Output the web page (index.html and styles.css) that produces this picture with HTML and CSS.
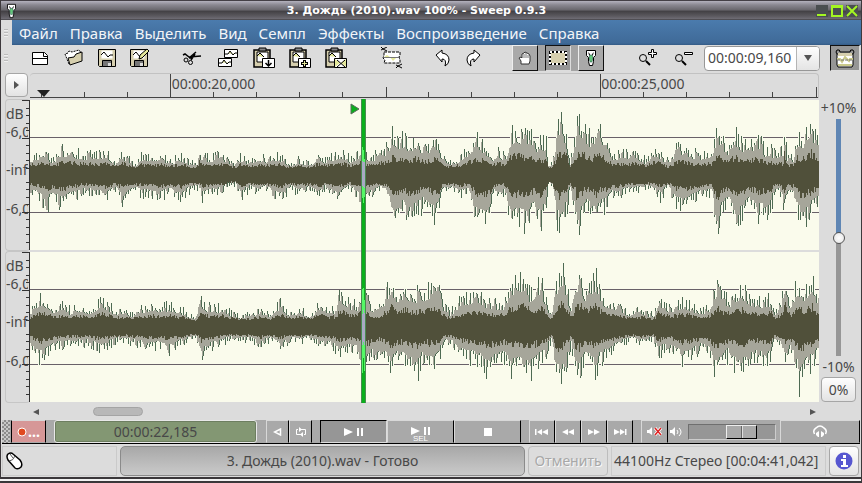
FILE: index.html
```html
<!DOCTYPE html>
<html lang="ru">
<head>
<meta charset="utf-8">
<title>3. Дождь (2010).wav 100% - Sweep 0.9.3</title>
<link rel="stylesheet" href="styles.css">
</head>
<body>
<svg class="defs" aria-hidden="true">
  <defs>
    <g id="board">
      <path d="M1 3h16v17h-16z" fill="#d6cfae" stroke="#000" stroke-width="1.500"/>
      <path d="M4 5h11v10h-11z" fill="#fff" stroke="#000"/>
      <path d="M4 9l3-3 4 4" fill="#e4e89a" stroke="#000"/>
      <path d="M6 1h7v3h-7z" fill="#888" stroke="#000"/>
      <path d="M9.500 11.500h12v9h-12z" fill="#fff" stroke="#000"/>
    </g>
    <g id="disk">
      <path d="M.5.5h17v17h-16l-1-1z" fill="#d6cfae" stroke="#000"/>
      <path d="M3.500 1.500h11v8h-11z" fill="#fff"/>
      <path d="M3 6l3-3 4 5 2-2h3" fill="none" stroke="#000"/>
      <path d="M4.500 11.500h9v6h-9z" fill="#777" stroke="#000"/>
      <path d="M10 14h3v3h-3z" fill="#ddd"/>
    </g>
    <g id="probe">
      <path d="M1.500 1.500h9v5l-2 2v4l-1 4h-3l-1-4v-4l-2-2z" fill="#fff" stroke="#000"/>
      <path d="M3 3l2 2v2l-1-1zM9 3l-2 2v2l1-1z" fill="#222"/>
      <path d="M5 6h2l1 2-1 5h-2l-1-5z" fill="#62c77a" stroke="#244" stroke-width=".5"/>
    </g>
  </defs>
</svg>
<div class="window">
  <header class="title">
    <svg class="title-icon" viewBox="0 0 12 18"><use href="#probe"/></svg>
    <h1>3. Дождь (2010).wav 100% - Sweep 0.9.3</h1>
    <div class="controls">
      <button aria-label="Свернуть"><svg viewBox="0 0 12 12"><path d="M1 10h9" stroke-width="2"/></svg></button>
      <button aria-label="Развернуть"><svg viewBox="0 0 12 12"><path d="M1 1h10v10h-10zM1 2h10"/></svg></button>
      <button aria-label="Закрыть"><svg viewBox="0 0 12 12"><path d="M1 1l10 10M11 1l-10 10" stroke-width="2"/></svg></button>
    </div>
  </header>

  <nav class="menu">
    <span class="grip"></span>
    <div class="menu-items">
      <a href="#">Файл</a><a href="#">Правка</a><a href="#">Выделить</a><a href="#">Вид</a><a href="#">Семпл</a><a href="#">Эффекты</a><a href="#">Воспроизведение</a><a href="#">Справка</a>
    </div>
  </nav>

  <div class="toolbar">
    <span class="grip"></span>
    <div class="group files">
      <button aria-label="Новый"><svg width="17" height="13" viewBox="0 0 17 13"><path d="M.5.5h12l3 3v9h-15z" fill="#fff" stroke="#000"/><path d="M11.500 1v3.500h4M1 6.500h14" fill="none" stroke="#000"/></svg></button>
      <button aria-label="Открыть"><svg width="20" height="18" viewBox="0 0 20 18"><path d="M5 15L1 5l3-1 1-2 3 1 7-2 3 4-7 5z" fill="#fff" stroke="#000" stroke-dasharray="2 1"/><path d="M6 16L4 9l6-1 2-3 6-2v9z" fill="#d6cfae" stroke="#000"/></svg></button>
      <button aria-label="Сохранить"><svg width="18" height="18" viewBox="0 0 18 18"><use href="#disk"/></svg></button>
      <button aria-label="Сохранить как"><svg width="20" height="20" viewBox="0 0 20 20"><use href="#disk" y="1"/><path d="M9 11l1-4 7-6 2 2-7 7z" fill="#e4e89a" stroke="#000"/></svg></button>
    </div>
    <div class="group edit">
      <button aria-label="Вырезать"><svg width="20" height="16" viewBox="0 0 20 16"><g fill="none" stroke="#000"><path d="M1 5l2-1 4 3 12-1M7 8l7-6M13 4l-4 6M7 8l3 0" stroke-width="1.500"/><circle cx="4" cy="10" r="2"/><circle cx="8.500" cy="12.500" r="2"/></g></svg></button>
      <button aria-label="Копировать"><svg width="20" height="18" viewBox="0 0 20 18"><path d="M6.500.5h13v8h-13zM.5 9.500h13v8h-13z" fill="#fff" stroke="#000"/><path d="M7 5h3l2-3 3 4 2-2h3M1 14h3l2-3 3 4 2-2h3" fill="#e4e89a" stroke="#000"/></svg></button>
      <button aria-label="Вставить"><svg width="22" height="22" viewBox="0 0 22 22"><use href="#board"/><path d="M15.500 13v5m-3-2l3 3 3-3" fill="none" stroke="#000" stroke-width="1.500"/></svg></button>
      <button aria-label="Смешать"><svg width="22" height="22" viewBox="0 0 22 22"><use href="#board"/><path d="M15.500 13v7M12 16.500h7" stroke="#000" stroke-width="3"/><path d="M15.500 14v5M13 16.500h5" stroke="#e4e89a"/></svg></button>
      <button aria-label="Плавная вставка"><svg width="22" height="22" viewBox="0 0 22 22"><use href="#board"/><path d="M10 12l5 4-5 4zM21 12l-5 4 5 4z" fill="#e4e89a"/><path d="M12 13l8 7M20 13l-8 7" stroke="#000"/></svg></button>
    </div>
    <div class="group crop">
      <button aria-label="Обрезать"><svg width="22" height="22" viewBox="0 0 22 22"><path d="M3 5h16v3l-1 2 1 3v3h-16l1-3-2-2 1-3z" fill="#fff" stroke="#000" stroke-dasharray="3 1"/><path d="M3 10l3-2 3 2 3 4 4-4z" fill="#e4e89a"/><path d="M3 10.500h15" stroke="#777"/><path d="M0 0l2 2 4-2M0 3l2-1 4 2M15 18l2 1 4-2M15 21l2-2 4 2" fill="none" stroke="#000"/></svg></button>
    </div>
    <div class="group history">
      <button aria-label="Отменить действие"><svg width="16" height="18" viewBox="0 0 16 18"><path d="M1 6l6-5v3q7 1 7 7 0 4-4 6 2-7-3-7v3z" fill="#fff" stroke="#000"/></svg></button>
      <button aria-label="Повторить"><svg width="16" height="18" viewBox="0 0 16 18"><path d="M15 6l-6-5v3q-7 1-7 7 0 4 4 6-2-7 3-7v3z" fill="#fff" stroke="#000"/></svg></button>
    </div>
    <div class="group modes">
      <button aria-label="Рука"><svg width="14" height="14" viewBox="0 0 14 14"><path d="M3 13V10L1 7l2-1 1 1V3l2-1 1-1 2 1 2 1 1 2v5l-1 3z" fill="#fff" stroke="#333"/><path d="M6 3v4M8 2v5M10 4v3" stroke="#777"/></svg></button>
      <button class="pressed" aria-label="Выделение"><svg width="18" height="14" viewBox="0 0 18 14"><path d="M1 1h16v12h-16z" fill="#d6cfae" stroke="#000" stroke-width="2"/><path d="M1 1h16v12h-16z" fill="none" stroke="#fff" stroke-width="2" stroke-dasharray="2"/></svg></button>
      <button aria-label="Проба"><svg width="12" height="18" viewBox="0 0 12 18"><use href="#probe"/></svg></button>
    </div>
    <div class="group zoom">
      <button aria-label="Увеличить"><svg width="20" height="18" viewBox="0 0 20 18"><circle cx="5" cy="9" r="3.500" fill="#ddd" stroke="#000"/><path d="M8 12l4 4" stroke="#000" stroke-width="2"/><path d="M13.500.5h2v3h3v2h-3v3h-2v-3h-3v-2h3z" fill="#fff" stroke="#000"/></svg></button>
      <button aria-label="Уменьшить"><svg width="20" height="18" viewBox="0 0 20 18"><circle cx="5" cy="9" r="3.500" fill="#ddd" stroke="#000"/><path d="M8 12l4 4" stroke="#000" stroke-width="2"/><path d="M10.500 3.500h8v2h-8z" fill="#fff" stroke="#000"/></svg></button>
    </div>
    <div class="combo">
      <input type="text" value="00:00:09,160" aria-label="Длина видимой области">
      <button aria-label="Выбрать"><svg width="8" height="6" viewBox="0 0 8 6"><path d="M0 0h8l-4 6z" fill="#555"/></svg></button>
    </div>
    <button class="follow" aria-label="Следовать"><svg width="20" height="20" viewBox="0 0 20 20"><path d="M2 6h16v11l-1 2h-14l-1-2z" fill="#fff" stroke="#000"/><path d="M3 5h14v3h-14z" fill="#d6cfae"/><path d="M2 11h3l2 3 3-5 4 4 1-2h3M3 17h14" fill="none" stroke="#c9c88a" stroke-width="2"/><path d="M2 12h16" stroke="#777" stroke-dasharray="3 1"/><path d="M2 6q-2-2 0-4 3-1 3 2h10q0-3 3-2 2 2 0 4" fill="none" stroke="#000"/></svg></button>
  </div>

  <main class="work">
    <button class="corner" aria-label="Меню"><svg width="6" height="8" viewBox="0 0 6 8"><path d="M0 0l5 4-5 4z" fill="#555"/></svg></button>
    <div class="ruler">
      <svg id="ruler" viewBox="0 0 789 24" preserveAspectRatio="none"></svg>
      <span class="stamp first">00:00:20,000</span>
      <span class="stamp second">00:00:25,000</span>
    </div>
    <div class="scales">
      <div class="scale"><span>dB</span><span>-6,0</span><span>-inf</span><span>-6,0</span><svg viewBox="0 0 8 151" preserveAspectRatio="none"></svg></div>
      <div class="scale"><span>dB</span><span>-6,0</span><span>-inf</span><span>-6,0</span><svg viewBox="0 0 8 151" preserveAspectRatio="none"></svg></div>
    </div>
    <div class="tracks">
      <svg class="wave" id="left" viewBox="0 0 789 150" preserveAspectRatio="none"></svg>
      <svg class="wave" id="right" viewBox="0 0 789 150" preserveAspectRatio="none"></svg>
      <div class="cursor"></div>
      <svg class="flag" viewBox="0 0 10 12"><path d="M1 1l8 5-8 5z" fill="#0aaf1c" stroke="#5d6a5d"/></svg>
    </div>
    <div class="speed">
      <label for="speed">+10%</label>
      <input id="speed" type="range" min="-10" max="10" value="0">
      <span>-10%</span>
      <button>0%</button>
    </div>
    <div class="scroll">
      <button aria-label="Назад"><svg width="6" height="6" viewBox="0 0 6 6"><path d="M6 0v6l-6-3z" fill="#555"/></svg></button>
      <div class="lane"><span class="thumb"></span></div>
      <button aria-label="Вперёд"><svg width="6" height="6" viewBox="0 0 6 6"><path d="M0 0v6l6-3z" fill="#555"/></svg></button>
    </div>
  </main>

  <div class="transport">
    <span class="dots"></span>
    <button class="record"><svg width="10" height="10" viewBox="0 0 10 10"><circle cx="5" cy="5" r="4" fill="#e04a20" stroke="#fff"/></svg>…</button>
    <output class="clock">00:00:22,185</output>
    <div class="keys small">
      <button aria-label="Реверс"><svg width="9" height="8" viewBox="0 0 9 8"><path d="M7.500 1v6l-6-3z" fill="none" stroke="#fff" stroke-width="1.500"/></svg></button>
      <button aria-label="Цикл"><svg width="12" height="10" viewBox="0 0 12 10"><path d="M3 2.500H1.500v5h3M9 7.500h1.500v-5h-3M6 7.500h-2M4 2.500h4" fill="none" stroke="#fff"/><path d="M4 0v5l3-2.500zM8 5v5L5 7.500z" fill="#fff"/></svg></button>
    </div>
    <div class="keys wide">
      <button class="pressed" aria-label="Пуск"><svg width="20" height="8" viewBox="0 0 20 8"><path d="M0 0l9 4-9 4zM13 0h2v8h-2zM17 0h2v8h-2z" fill="#fff"/></svg></button>
      <button class="sel" aria-label="Пуск выделения"><svg width="20" height="8" viewBox="0 0 20 8"><path d="M0 0l9 4-9 4zM13 0h2v8h-2zM17 0h2v8h-2z" fill="#fff"/></svg><small>SEL</small></button>
      <button aria-label="Стоп"><svg width="8" height="8" viewBox="0 0 8 8"><path d="M0 0h8v8H0z" fill="#fff"/></svg></button>
    </div>
    <div class="keys skip">
      <button aria-label="В начало"><svg width="14" height="6" viewBox="0 0 14 6"><path d="M0 0h1.500v6H0zM7 0v6L2 3zM13 0v6L7 3z" fill="#fff"/></svg></button>
      <button aria-label="Назад"><svg width="12" height="6" viewBox="0 0 12 6"><path d="M6 0v6L0 3zM12 0v6L6 3z" fill="#fff"/></svg></button>
      <button aria-label="Вперёд"><svg width="12" height="6" viewBox="0 0 12 6"><path d="M0 0v6l6-3zM6 0v6l6-3z" fill="#fff"/></svg></button>
      <button aria-label="В конец"><svg width="14" height="6" viewBox="0 0 14 6"><path d="M1 0v6l6-3zM7 0v6l5-3zM12 0h1.500v6H12z" fill="#fff"/></svg></button>
    </div>
    <div class="keys small">
      <button class="mute" aria-label="Без звука"><svg width="15" height="9" viewBox="0 0 15 9"><path d="M0 3h2l3-3v8L2 6H0z" fill="#fff"/><path d="M8 1l6 7M14 1l-6 7" stroke="#fff" stroke-width="3"/><path d="M8 1l6 7M14 1l-6 7" stroke="#d22" stroke-width="1.500"/></svg></button>
    </div>
    <label class="volume" for="volume"><svg width="14" height="10" viewBox="0 0 14 10"><path d="M0 3h2l3-3v9L2 6H0z" fill="#fff"/><path d="M7 3q2 2 0 4M9 1q4 4 0 8" fill="none" stroke="#fff"/></svg></label>
    <input id="volume" type="range" min="0" max="100" value="68">
    <button class="monitor" aria-label="Наушники"><svg width="14" height="13" viewBox="0 0 14 13"><path d="M1.500 9Q-.5 5 3 3q4-4 8 0 3.500 2 1.500 6" fill="none" stroke="#fff" stroke-width="1.500"/><path d="M3 8l3-2v6H5L3 10zM11 8L8 6v6h1l2-2z" fill="#fff"/></svg></button>
  </div>

  <footer class="status">
    <div class="cell pointer"><svg width="18" height="19" viewBox="0 0 18 19"><path d="M2 2q3-2 5 0l7 6q3 4 1 7-3 3-6 1L2 8Q0 4 2 2z" fill="#fff" stroke="#000" stroke-width="1.500"/><path d="M3 9q4 0 6-5M4 2l3 4" fill="none" stroke="#555"/></svg></div>
    <div class="progress">3. Дождь (2010).wav - Готово</div>
    <button class="cancel" disabled>Отменить</button>
    <div class="cell info">44100Hz Стерео [00:04:41,042]</div>
    <button class="about" aria-label="Сведения"><svg width="18" height="18" viewBox="0 0 18 18"><circle cx="9" cy="9" r="8.500" fill="#5656d0"/><path d="M8 3h3v3H8zM6 7h5v6h2v2H6v-2h2V9H6z" fill="#fff"/></svg></button>
  </footer>
  <div class="resize"><span></span></div>
</div>
<script src="wave.js"></script>
</body>
</html>
```
FILE: styles.css
```css
* { box-sizing: border-box; }
body {
  margin: 0;
  font: 14px/18px "Noto Sans", "Open Sans", sans-serif;
  color: #484848;
}
button, input { font: inherit; color: inherit; margin: 0; padding: 0; border: 0; background: none; }
button { display: flex; align-items: center; justify-content: center; }
svg { display: block; flex: none; }
.defs { position: absolute; width: 0; height: 0; }
.window {
  height: 100vh;
  display: grid;
  grid-template-columns: minmax(0, 1fr);
  grid-template-rows: 20px 25px 28px minmax(0, 1fr) 24px 33px 6px;
  border: solid #3d393c;
  border-width: 0 1px 0 1px;
  background: #dcdcdc;
}

.title {
  display: flex;
  align-items: center;
  padding: 0 3px 0 5px;
  border-top: 1px solid #444046;
  background: linear-gradient(#b4b2be, #8b8992 20%, #6c6a70 45%, #444246 55%, #5c5a60 80%, #6e6c74 94%, #39363a);
}
.title-icon { width: 11px; height: 16px; }
.title h1 {
  flex: 1;
  margin: 0;
  text-align: center;
  font: bold 11px/16px "DejaVu Sans", sans-serif;
  color: #fff;
}
.controls { display: flex; gap: 3px; }
.controls svg { width: 12px; height: 12px; fill: none; stroke: #a4f622; stroke-width: 2; }
.controls button { background: #4a4e50; }

.grip {
  width: 4px;
  height: 8px;
  margin: 0 3px;
  background: repeating-linear-gradient(#bcbcbc 0 1px, #efefef 1px 2px, transparent 2px 3px);
}
.menu { display: flex; align-items: center; }
.menu .grip { margin-right: 4px; }
.menu-items {
  flex: 1;
  align-self: stretch;
  display: flex;
  align-items: center;
  gap: 12px;
  padding-left: 7px;
  background: linear-gradient(#4b7bad, #3f6a98 92%, #345b86);
}
.menu a { color: #f2f5f8; text-decoration: none; font-size: 15px; }

.toolbar { display: flex; align-items: center; padding: 0 1px 2px 0; }
.toolbar > .grip { margin-right: 13px; }
.group { display: flex; align-items: center; margin-right: 20px; }
.group button { height: 26px; }
.files { margin: 0 18px 0 3px; }
.files button { width: 33px; }
.edit button, .crop button, .zoom button { width: 36px; }
.crop { margin-right: 18px; }
.history { margin-right: 24px; }
.history button { width: 30px; }
.modes { gap: 7px; margin-right: 26px; background: #a4a4a4; }
.modes button {
  width: 26px;
  background: #a9a9a9;
  border: 1px solid #eee;
  border-color: #eee #111 #111 #eee;
}
.modes .pressed, .follow {
  background: #969696;
  border: 1px solid #111;
  border-color: #111 #ddd #ddd #111;
}
.zoom { margin-right: 2px; }
.combo {
  flex: 1;
  display: flex;
  height: 25px;
  margin-right: 10px;
  border: 1px solid #979797;
  border-radius: 4px;
  background: #fff;
  overflow: hidden;
}
.combo input { flex: 1; width: 0; padding-left: 3px; }
.combo button { width: 23px; border-left: 1px solid #b5b5b5; background: linear-gradient(#fdfdfd, #e4e4e4); }
.follow { width: 30px; height: 26px; }

.work {
  display: grid;
  grid-template-columns: 29px minmax(0, 1fr) 42px;
  grid-template-rows: 26px minmax(0, 1fr) 17px;
}
.corner, .speed button, .about {
  border: 1px solid #a6a6a6;
  border-radius: 4px;
  background: linear-gradient(#fefefe, #e3e3e3);
}
.corner { width: 23px; height: 24px; margin-left: 4px; }
.ruler {
  position: relative;
  height: 25px;
  border-top: 1px solid #c2c2c2;
  border-right: 1px solid #c2c2c2;
  border-radius: 4px 4px 0 0;
}
.ruler svg { width: 100%; height: 24px; }
.stamp { position: absolute; top: 1px; }
.first { left: 18%; }
.second { left: 72.500%; }
.scales { display: grid; grid-template-rows: minmax(0, 1fr) minmax(0, 1fr); padding-left: 4px; }
.scale {
  position: relative;
  display: grid;
  grid-template-rows: 18px 38px 39px 18px;
  padding-top: 5px;
  border: 1px solid #c6c6c6;
  border-right: 0;
  border-radius: 4px;
}
.scale span { width: 22px; overflow: hidden; white-space: nowrap; }
.scale svg { position: absolute; right: 0; top: 0; width: 8px; height: 100%; }
.tracks {
  position: relative;
  display: grid;
  grid-template-rows: minmax(0, 1fr) minmax(0, 1fr);
  gap: 2px;
  padding: 1px 0;
}
.wave { width: 100%; height: 100%; min-height: 0; background: #fafbec; }
.cursor {
  position: absolute;
  left: 42%;
  top: 0;
  bottom: 0;
  width: 5px;
  border: solid #4a8a50;
  border-width: 0 1px;
  background: #0aaf1c;
}
.flag { position: absolute; left: 40.500%; top: 4px; width: 10px; height: 12px; }
.speed {
  grid-column: 3;
  grid-row: 1 / span 3;
  display: flex;
  flex-direction: column;
  align-items: center;
  padding: 26px 3px 18px 0;
}
.speed input {
  appearance: none;
  writing-mode: vertical-lr;
  direction: rtl;
  flex: 1;
  min-height: 0;
  width: 14px;
  margin: 2px 0;
  background: linear-gradient(#5f86b4 0 50%, #969696 50%) center / 5px 100% no-repeat;
}
.speed input::-webkit-slider-thumb {
  appearance: none;
  width: 12px;
  height: 12px;
  border: 1px solid #555;
  border-radius: 50%;
  background: radial-gradient(#fff, #e2e2e2);
}
.speed button { width: 35px; height: 25px; margin-top: 1px; }
.scroll {
  grid-column: 1 / span 2;
  grid-row: 3;
  display: flex;
  align-items: center;
  padding: 0 3px 0 32px;
}
.lane { flex: 1; padding-left: 6.900%; }
.thumb {
  display: block;
  width: 50px;
  height: 9px;
  border: 1px solid #a4a4a4;
  border-radius: 5px;
  background: #b8b8b8;
}

.transport {
  display: flex;
  margin: 0 1px;
  background: #a9a9a9;
  border-bottom: 1px solid #000;
}
.dots {
  width: 8px;
  background: repeating-conic-gradient(#8c8c8c 0 25%, #c8c8c8 0 50%) 0 0 / 4px 4px;
}
.transport button { border: 1px solid #d8d8d8; border-color: #d8d8d8 #000 #a9a9a9 #d8d8d8; }
.transport .record {
  width: 35px;
  gap: 1px;
  margin: 0 8px 0 1px;
  background: #d69797;
  border-left-color: #000;
  color: #fff;
  font-weight: bold;
}
.clock {
  flex: 1;
  display: grid;
  place-items: center;
  margin-right: 9px;
  border: 1px solid #e8e8e8;
  border-radius: 3px;
  background: #839773;
  box-shadow: inset 0 0 0 1px #6d7e60;
}
.keys { display: flex; }
.small button { width: 23px; }
.small .mute { width: 27px; }
.small, .wide { margin-right: 8px; }
.wide button { width: 67px; }
.transport .wide .pressed { background: #969696; border-color: #000 #ddd #ddd #000; }
.transport .sel { flex-direction: column; padding-top: 6px; }
.sel small { font: 8px/7px "Liberation Sans", sans-serif; color: #fff; }
.skip { margin-right: 8px; }
.skip button { width: 26px; }
.transport .keys:has(.mute) { margin-right: 2px; }
.volume { width: 18px; display: flex; align-items: center; }
#volume {
  appearance: none;
  width: 88px;
  height: 16px;
  margin: 4px 4px 0 0;
  background: #969696;
  border: 1px solid #6f6f6f;
  border-color: #6f6f6f #ccc #ccc #6f6f6f;
}
#volume::-webkit-slider-thumb {
  appearance: none;
  width: 31px;
  height: 14px;
  border: 1px solid #eee;
  border-color: #eee #000 #000 #eee;
  background: linear-gradient(90deg, transparent 14px, #666 14px 15px, #ddd 15px 16px, transparent 16px), #a9a9a9;
}
.transport .monitor { width: 80px; }

.status { display: flex; gap: 3px; padding: 2px 1px 1px; }
.cell { display: flex; align-items: center; border: 1px solid #cacaca; }
.pointer { width: 115px; padding-left: 3px; }
.progress {
  flex: 1;
  display: grid;
  place-items: center;
  border: 1px solid #8b8b8b;
  border-radius: 5px;
  background: linear-gradient(#a8a8a8, #cacaca);
}
.cancel {
  width: 80px;
  border: 1px solid #bdbdbd;
  border-radius: 4px;
  color: #a8a8a8;
  text-shadow: 1px 1px #f8f8f8;
}
.info { width: 215px; padding-left: 2px; white-space: nowrap; }
.about { width: 30px; margin-right: 1px; }
.resize {
  border: solid #3a373a;
  border-width: 1px 0;
  background: #3a373a;
  padding: 1px 0 0;
}
.resize span {
  display: block;
  height: 2px;
  margin: 0 26px 0 25px;
  background: #f2f2f2;
  box-shadow: -26px 0 #f2f2f2, 26px 0 #f2f2f2;
}
```
FILE: wave.js
```js
// Envelope samples: x, peak above the axis, peak below the axis.
const LEFT = `30 18 16,38 22 22,43 26 30,47 24 34,52 16 25,62 27 32,70 26 25,85 22 18,100 22 22,105 24 26,115 15 15,122 23 28,
135 12 16,140 20 20,150 18 20,160 21 24,170 14 18,180 20 26,190 14 16,197 14 14,199 28 14,202 20 24,210 18 20,221 24 18,228 16 10,
235 12 10,240 20 24,250 15 14,258 20 20,265 18 14,280 20 26,290 12 14,298 17 20,310 12 16,318 22 24,325 16 14,338 24 24,343 23 20,
350 17 14,362 26 28,370 18 22,380 26 16,386 28 20,389 30 30,392 46 48,397 36 44,403 40 36,409 34 48,416 38 40,425 28 30,432 36 44,
439 36 38,442 18 18,450 14 14,460 18 22,468 28 18,477 39 48,481 36 50,488 22 50,493 18 20,497 28 20,505 18 20,511 44 56,517 48 46,
525 40 52,529 48 46,535 32 36,540 36 52,546 36 38,548 12 10,552 14 12,557 46 50,561 54 56,566 46 40,570 14 14,575 36 36,577 58 70,
579 56 56,585 48 34,592 38 36,596 52 54,600 50 36,606 36 34,612 22 22,618 22 24,628 22 16,636 24 16,645 16 14,656 28 18,660 24 24,
668 14 14,676 28 30,684 30 34,692 24 28,700 22 22,708 24 20,712 24 20,714 38 46,718 44 56,722 36 40,728 30 30,735 44 46,740 34 48,
748 32 32,758 38 42,765 26 40,771 28 34,775 22 16,779 26 18,783 24 30,784 54 36,787 18 20,793 18 22,797 42 34,801 36 54,805 42 48,
810 58 44,812 54 36,819 28 30`;
const RIGHT = `30 18 20,40 32 34,46 28 30,55 18 22,62 25 20,70 18 18,82 22 18,90 18 18,101 28 26,105 25 22,115 18 16,125 17 14,
133 14 18,140 20 18,150 22 22,158 22 20,168 22 26,180 19 18,190 13 14,196 10 12,199 24 18,201 28 34,207 22 24,215 20 20,222 22 18,
230 16 12,240 12 14,250 14 14,260 19 20,270 14 14,280 26 22,290 14 14,300 20 16,310 12 12,320 26 20,328 18 20,335 20 24,340 38 30,
345 30 26,350 24 24,357 24 26,362 36 40,367 32 42,372 22 30,380 20 26,386 36 36,391 48 46,396 36 36,400 38 36,406 42 36,412 34 44,
417 36 52,423 38 34,433 42 44,438 43 36,443 24 18,450 16 16,460 28 30,472 34 34,480 34 38,488 26 48,495 26 40,503 24 34,511 46 46,
518 48 44,525 54 46,530 36 50,540 48 36,546 30 30,551 14 14,556 44 52,561 62 56,566 44 40,571 20 18,575 44 46,579 60 52,585 38 36,
590 46 38,597 54 50,600 38 36,606 26 32,615 24 24,622 20 18,630 14 14,638 20 16,645 18 18,653 12 12,658 30 30,665 22 24,672 22 24,
682 26 36,690 24 32,700 18 24,708 20 24,714 36 44,717 48 50,722 36 40,730 28 28,737 38 50,742 40 46,750 30 36,758 28 32,766 28 34,
771 30 36,774 16 14,780 24 20,785 52 36,790 24 24,797 46 46,799 44 64,805 36 46,813 52 38,819 20 24`;

const WIDTH = 789;
const CURSOR = [332, 335];

function noise(seed) {
  let s = seed;
  return () => {
    s = (s * 1664525 + 1013904223) % 4294967296;
    return s / 4294967296;
  };
}

function envelope(points, x, side) {
  const i = Math.max(1, points.findIndex(p => p[0] > x));
  const a = points[i - 1], b = points[i];
  return a[side] + (b[side] - a[side]) * (x - a[0]) / (b[0] - a[0]);
}

function draw(id, text, seed) {
  const points = text.split(',').map(p => p.trim().split(' ').map(Number));
  const random = noise(seed);
  const peaks = [], core = [];
  for (let x = 0; x < WIDTH; x++) {
    const up = envelope(points, x + 30, 1), down = envelope(points, x + 30, 2);
    const height = e => Math.round(e * (0.68 + 0.5 * Math.pow(random(), 2)));
    const inner = e => Math.round(4 + e * (0.22 + 0.18 * random()));
    peaks.push([height(up), height(down)]);
    core.push([inner(up), inner(down)]);
  }
  const body = peaks.map((p, i) => {
    const n = peaks[i + 1] || p;
    return [Math.min(p[0], n[0]), Math.min(p[1], n[1])];
  });
  const bars = (list, from, to) => list.slice(from, to)
    .map((p, i) => `M${from + i} ${75 - p[0]}h1V${75 + p[1]}h-1z`).join('');
  const halo = peaks.map((p, i) => `M${i - 1} ${75 - p[0]}h3V${75 + p[1]}h-3z`).join('');
  const path = (d, fill) => `<path d="${d}" fill="${fill}"/>`;
  const [c0, c1] = CURSOR;
  document.getElementById(id).innerHTML = '<g shape-rendering="crispEdges">' +
    path('M0 37h789v1H0zM0 112h789v1H0z', '#686068') +
    path(halo, '#fafbec') +
    path(bars(peaks, 0, WIDTH), '#4d6a52') +
    path(bars(body, 0, WIDTH), '#a6a69a') +
    path(bars(core, 0, WIDTH), '#50503a') + '</g>';
  return path(bars(peaks, c0, c1), '#55f766') + path(bars(core, c0, c1), '#a8aac4');
}

// The cursor tints the columns it covers, so they are painted above it.
[['left', LEFT, 7], ['right', RIGHT, 91]].forEach(([id, text, seed], row) => {
  const tint = draw(id, text, seed);
  const wave = document.getElementById(id);
  const over = wave.cloneNode(false);
  over.removeAttribute('id');
  over.setAttribute('class', 'wave over');
  over.innerHTML = `<g shape-rendering="crispEdges">${tint}</g>`;
  over.style.gridArea = `${row + 1} / 1`;
  wave.style.gridArea = `${row + 1} / 1`;
  over.style.background = 'none';
  over.style.zIndex = 2;
  wave.parentNode.append(over);
});

// Time ruler: ten ticks per five seconds.
let ticks = 'M0 23h789v1H0z';
for (let i = -3; i <= 15; i++) {
  const x = Math.round(140 + i * 43.1);
  const height = i % 10 === 0 ? 23 : i % 5 === 0 ? 10 : 5;
  ticks += `M${x} ${23 - height}h1v${height}h-1z`;
}
document.getElementById('ruler').innerHTML =
  `<path d="${ticks}" fill="#444" shape-rendering="crispEdges"/><path d="M7 16h13l-6 7z" fill="#222"/>`;

let marks = 'M7 0h1v151H7z';
for (let i = 0; i < 20; i++) {
  const length = i % 5 === 0 ? 7 : 3;
  marks += `M${7 - length} ${Math.round(i * 7.5)}h${length}v1h-${length}z`;
}
document.querySelectorAll('.scale svg').forEach(svg => {
  svg.innerHTML = `<path d="${marks}" fill="#333" shape-rendering="crispEdges"/>`;
});
```
